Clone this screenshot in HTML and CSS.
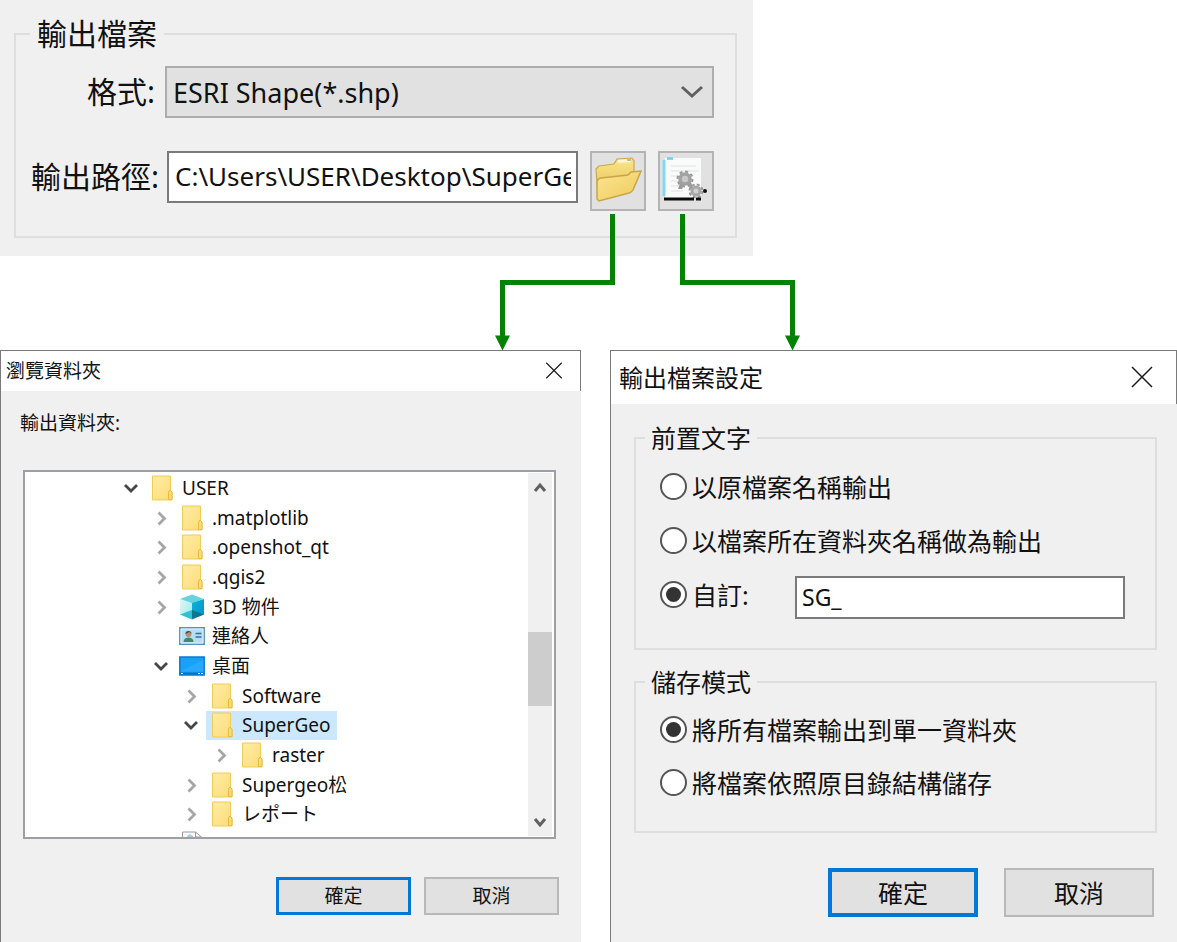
FILE: index.html
```html
<!DOCTYPE html>
<html lang="zh-Hant">
<head>
<meta charset="utf-8">
<meta name="viewport" content="width=device-width, initial-scale=1">
<title>輸出檔案</title>
<link rel="stylesheet" href="styles.css">
</head>
<body>
<svg class="sprites" aria-hidden="true">
  <defs>
    <linearGradient id="folder-fill" x1="0" y1="0" x2="1" y2="1"><stop offset="0" stop-color="#ffeca6"/><stop offset="1" stop-color="#fddc76"/></linearGradient>
    <linearGradient id="open-back" x1="0" y1="0" x2="0" y2="1"><stop offset="0" stop-color="#fbe58d"/><stop offset="1" stop-color="#e2bd49"/></linearGradient>
    <linearGradient id="open-front" x1="0" y1="0" x2="1" y2="1"><stop offset="0" stop-color="#fbe594"/><stop offset="1" stop-color="#efca58"/></linearGradient>
    <linearGradient id="cube-left" x1="0" y1="0" x2="1" y2="1"><stop offset="0" stop-color="#e2f8f8"/><stop offset="1" stop-color="#9fe6ea"/></linearGradient>
    <linearGradient id="cube-right" x1="0" y1="0" x2="1" y2="1"><stop offset="0" stop-color="#10b4d8"/><stop offset="1" stop-color="#0090c8"/></linearGradient>
  </defs>
  <symbol id="i-folder" viewBox="0 0 26 26">
    <path d="M3.500 1h18v15l1.500 2v7h-19.500z" fill="url(#folder-fill)" stroke="#f0cb55"/>
    <path d="M19.500 24.500v-7.500l1.500-2 2 2v7.500z" fill="#fbdc78" stroke="#e6bb3e"/>
  </symbol>
  <symbol id="i-cube" viewBox="0 0 26 26">
    <path d="M1 5l12 3.500v16.500l-12-4.500z" fill="url(#cube-left)"/>
    <path d="M25 5l-12 3.500v16.500l12-4.500z" fill="url(#cube-right)"/>
    <path d="M1 5l12-4.500 12 4.500-12 4z" fill="#62d3df"/>
    <path d="M13 16l12 4.500-12 5z" fill="#12667c" opacity=".75"/>
    <path d="M1 20.500l12-4.500v9.500z" fill="#2cc3d2"/>
  </symbol>
  <symbol id="i-contact" viewBox="0 0 26 26">
    <path d="M.8 4.800h24.400v16.400h-24.400z" fill="#b5def5" stroke="#5b91b5" stroke-width="1.500"/>
    <path d="M2 6h22v14h-22z" fill="none" stroke="#dff2fc"/>
    <path d="M4.500 19c0-3 2-4.500 5-4.500s5 1.500 5 4.500z" fill="#43886a"/>
    <circle cx="9.500" cy="11" r="3" fill="#b58f72"/><path d="M6.500 11c-.5-4 6-4 6-.5l-2-1.500z" fill="#51473c"/>
    <path d="M16.500 10.500h6M16.500 14h6" stroke="#376f98" stroke-width="1.500"/>
  </symbol>
  <symbol id="i-desktop" viewBox="0 0 26 26">
    <path d="M.8 4h24.400v18h-24.400z" fill="#19a1fa" stroke="#087cc9" stroke-width="1.500"/>
    <path d="M1.500 18.500l23-12v12z" fill="#3cb0ff" opacity=".5"/>
    <path d="M1.500 20.500h23" stroke="#0870b8" stroke-width="2"/>
    <path d="M2 20.500h2M19 20.500h2M22 20.500h2" stroke="#d6f0ff"/>
  </symbol>
  <symbol id="i-file" viewBox="0 0 26 26">
    <path d="M3.500 1h13l6 5v19h-19z" fill="#fafafa" stroke="#9b9b9b"/>
    <path d="M16.500 1v5h6" fill="none" stroke="#9b9b9b"/><path d="M8 5l3-2 3 2v4h-6z" fill="#9fd3e8"/>
  </symbol>
  <symbol id="i-down" viewBox="0 0 20 20"><path d="M4 7l6 6 6-6" fill="none" stroke="#464646" stroke-width="2.800"/></symbol>
  <symbol id="i-right" viewBox="0 0 20 20"><path d="M7.500 4.500l6 6-6 6" fill="none" stroke="#a6a6a6" stroke-width="2.800"/></symbol>
  <symbol id="i-close" viewBox="0 0 22 22"><path d="M1 1l20 20M21 1L1 21" fill="none" stroke="#1a1a1a" stroke-width="1.500"/></symbol>
</svg>

<main class="board">
  <section class="export">
    <fieldset class="group group-export">
      <legend>輸出檔案</legend>
      <div class="field">
        <label class="field-label field-label-format" for="format">格式:</label>
        <div class="select-wrap">
          <select id="format" class="select"><option>ESRI Shape(*.shp)</option></select>
          <svg class="select-arrow" viewBox="0 0 24 16" aria-hidden="true"><path d="M2 3l10 9 10-9" fill="none" stroke="#606060" stroke-width="3"/></svg>
        </div>
      </div>
      <div class="field field-path">
        <label class="field-label" for="path">輸出路徑:</label>
        <input id="path" class="text path" type="text" value="C:\Users\USER\Desktop\SuperGeo">
        <button class="tool" type="button" aria-label="瀏覽資料夾">
          <svg class="tool-icon" viewBox="0 0 50 54" aria-hidden="true">
            <path d="M3 15l3-3 15-2 3-5 15-1 2 3v11l2 3-34 24-4-3z" fill="url(#open-back)" stroke="#c9aa50" stroke-width="1.200"/>
            <path d="M25 6l12-1 1 3-13 1z" fill="#fff6cd"/><path d="M34 5h4v2h-4z" fill="#9fc9b0"/>
            <path d="M4 28q0-3 4-4l27-3 3-3 10-1-8 19q-1 2-4 3l-30 8-2-2z" fill="url(#open-front)" stroke="#c8a548" stroke-width="1.500"/>
          </svg>
        </button>
        <button class="tool" type="button" aria-label="輸出檔案設定">
          <svg class="tool-icon" viewBox="0 0 50 54" aria-hidden="true">
            <path d="M4 4h36v38l-4 3h-32z" fill="#f9fafa"/>
            <path d="M3 6v36" stroke="#86d7f5" stroke-width="3"/><path d="M6 4.500h6" stroke="#6dcdf2" stroke-width="2.500"/>
            <path d="M10 12h25M10 17h28M10 22h8M10 27h6M10 32h8M10 37h12" stroke="#e8eaea" stroke-width="1.500"/>
            <circle cx="24" cy="25" r="5" fill="#c8c8c8" stroke="#a2a2a2" stroke-width="3.500"/>
            <circle cx="24" cy="25" r="7.500" fill="none" stroke="#969696" stroke-width="2" stroke-dasharray="3 2.890"/>
            <path d="M19 29l-2 6h4l2-4M27 29l2 6 3-1-2-6" fill="#9b9b9b"/>
            <circle cx="35" cy="37" r="4" fill="#d0d0d0" stroke="#a8a8a8" stroke-width="3"/>
            <circle cx="35" cy="37" r="6.500" fill="none" stroke="#9a9a9a" stroke-width="2" stroke-dasharray="3 2.100"/>
            <circle cx="44" cy="37" r="2" fill="#111"/>
            <path d="M3 45h30M35 45h5" stroke="#0c0c0c" stroke-width="3"/>
          </svg>
        </button>
      </div>
    </fieldset>
  </section>

  <svg class="connectors" viewBox="0 0 1177 137" preserveAspectRatio="none" aria-hidden="true">
    <path d="M612.500 0v68.500H502.500v54M682.500 0v68.500H792.500v54" fill="none" stroke="#048204" stroke-width="5"/>
    <path d="M495 121.500h15l-7.500 15zM785 121.500h15l-7.500 15z" fill="#048204"/>
  </svg>

  <div class="dialogs">
    <section class="dialog">
      <header class="titlebar titlebar-browse">
        <h2 class="title">瀏覽資料夾</h2>
        <button class="close" type="button" aria-label="關閉"><svg class="close-icon-small" aria-hidden="true"><use href="#i-close"/></svg></button>
      </header>
      <div class="body body-browse">
        <p class="prompt">輸出資料夾:</p>
        <div class="tree">
          <ul class="nodes">
            <li class="node level-0"><svg class="twisty"><use href="#i-down"/></svg><a class="item" href="#"><svg class="icon"><use href="#i-folder"/></svg>USER</a></li>
            <li class="node level-1"><svg class="twisty"><use href="#i-right"/></svg><a class="item" href="#"><svg class="icon"><use href="#i-folder"/></svg>.matplotlib</a></li>
            <li class="node level-1"><svg class="twisty"><use href="#i-right"/></svg><a class="item" href="#"><svg class="icon"><use href="#i-folder"/></svg>.openshot_qt</a></li>
            <li class="node level-1"><svg class="twisty"><use href="#i-right"/></svg><a class="item" href="#"><svg class="icon"><use href="#i-folder"/></svg>.qgis2</a></li>
            <li class="node level-1"><svg class="twisty"><use href="#i-right"/></svg><a class="item" href="#"><svg class="icon"><use href="#i-cube"/></svg>3D 物件</a></li>
            <li class="node level-1"><svg class="twisty"></svg><a class="item" href="#"><svg class="icon"><use href="#i-contact"/></svg>連絡人</a></li>
            <li class="node level-1"><svg class="twisty"><use href="#i-down"/></svg><a class="item" href="#"><svg class="icon"><use href="#i-desktop"/></svg>桌面</a></li>
            <li class="node level-2"><svg class="twisty"><use href="#i-right"/></svg><a class="item" href="#"><svg class="icon"><use href="#i-folder"/></svg>Software</a></li>
            <li class="node level-2"><svg class="twisty"><use href="#i-down"/></svg><a class="item selected" href="#"><svg class="icon"><use href="#i-folder"/></svg>SuperGeo</a></li>
            <li class="node level-3"><svg class="twisty"><use href="#i-right"/></svg><a class="item" href="#"><svg class="icon"><use href="#i-folder"/></svg>raster</a></li>
            <li class="node level-2"><svg class="twisty"><use href="#i-right"/></svg><a class="item" href="#"><svg class="icon"><use href="#i-folder"/></svg>Supergeo松</a></li>
            <li class="node level-2"><svg class="twisty"><use href="#i-right"/></svg><a class="item" href="#"><svg class="icon"><use href="#i-folder"/></svg>レポート</a></li>
            <li class="node level-1"><svg class="twisty"></svg><span class="item"><svg class="icon"><use href="#i-file"/></svg></span></li>
          </ul>
          <div class="scrollbar" aria-hidden="true">
            <svg class="scroll-arrow" viewBox="0 0 24 30"><path d="M7 18l5-6 5 6" fill="none" stroke="#606060" stroke-width="3"/></svg>
            <div class="track-above"></div>
            <div class="thumb"></div>
            <div class="track-below"></div>
            <svg class="scroll-arrow" viewBox="0 0 24 30"><path d="M7 13l5 6 5-6" fill="none" stroke="#606060" stroke-width="3"/></svg>
          </div>
        </div>
        <div class="actions actions-browse">
          <button class="button button-small primary" type="button">確定</button>
          <button class="button button-small" type="button">取消</button>
        </div>
      </div>
    </section>

    <section class="dialog">
      <header class="titlebar titlebar-settings">
        <h2 class="title">輸出檔案設定</h2>
        <button class="close" type="button" aria-label="關閉"><svg class="close-icon" aria-hidden="true"><use href="#i-close"/></svg></button>
      </header>
      <form class="body body-settings">
        <fieldset class="group group-prefix">
          <legend>前置文字</legend>
          <label class="choice"><input class="radio" type="radio" name="prefix">以原檔案名稱輸出</label>
          <label class="choice"><input class="radio" type="radio" name="prefix">以檔案所在資料夾名稱做為輸出</label>
          <div class="custom">
            <label class="choice choice-custom"><input class="radio" type="radio" name="prefix" checked>自訂:</label>
            <input class="text custom-text" type="text" value="SG_" aria-label="自訂">
          </div>
        </fieldset>
        <fieldset class="group group-mode">
          <legend>儲存模式</legend>
          <label class="choice"><input class="radio" type="radio" name="mode" checked>將所有檔案輸出到單一資料夾</label>
          <label class="choice"><input class="radio" type="radio" name="mode">將檔案依照原目錄結構儲存</label>
        </fieldset>
        <div class="actions actions-settings">
          <button class="button button-large primary" type="button">確定</button>
          <button class="button button-large" type="button">取消</button>
        </div>
      </form>
    </section>
  </div>
</main>
</body>
</html>
```
FILE: styles.css
```css
* {
  box-sizing: border-box;
}

body {
  margin: 0;
  background: #fff;
  color: #111;
  font-family: "Noto Sans", "Noto Sans CJK TC", sans-serif;
}

button,
input,
select {
  color: inherit;
  font: inherit;
}

.sprites {
  position: absolute;
  width: 0;
  height: 0;
}

.board {
  position: relative;
  display: flex;
  flex-direction: column;
  gap: 94px;
  min-height: 100vh;
}

.connectors {
  position: absolute;
  top: 214px;
  left: 0;
  width: 100%;
  height: 137px;
  pointer-events: none;
}

/* Shared controls */

.group {
  display: flex;
  flex-direction: column;
  min-width: 0;
  margin: 0;
  border: 2px solid #dedede;
}

.group legend {
  padding: 0 6px;
}

.text {
  min-width: 0;
  border: 2px solid #7a7a7a;
  border-radius: 0;
  background: #fff;
  outline: 0;
}

.button {
  padding: 0 0 2px;
  border: 2px solid #b8b8b8;
  background: #e1e1e1;
}

.button.primary {
  border-color: #0078d7;
}

/* Export panel */

.export {
  width: 64%;
  padding: 18px 16px 18px 14px;
  background: #f0f0f0;
  font-size: 26px;
}

.group-export {
  gap: 33px;
  padding: 16px 21px 25px 14px;
}

.group-export legend {
  padding: 0 7px;
  font-size: 30px;
  line-height: 32px;
}

.field {
  display: flex;
  align-items: center;
}

.field-path {
  align-items: flex-start;
  gap: 12px;
}

.field-label {
  flex: none;
  width: 125px;
  font-size: 30px;
  line-height: 52px;
  text-align: right;
  white-space: nowrap;
}

.field-label-format {
  margin-right: 10px;
}

.field-path .field-label {
  width: 129px;
  margin-right: -4px;
}

.select-wrap {
  position: relative;
  flex: 1;
}

.select {
  display: block;
  width: 100%;
  height: 52px;
  padding: 0 48px 0 6px;
  appearance: none;
  border: 2px solid #adadad;
  border-radius: 0;
  background: #e1e1e1;
  font-size: 27px;
}

.select-arrow {
  position: absolute;
  top: 18px;
  right: 10px;
  width: 24px;
  height: 16px;
  pointer-events: none;
}

.path {
  flex: 1;
  height: 52px;
  padding: 0 5px 2px 6px;
}

.tool {
  display: flex;
  flex: none;
  align-items: center;
  justify-content: center;
  width: 56px;
  height: 60px;
  padding: 0;
  border: 2px solid #b4b4b4;
  background: #e1e1e1;
}

.tool-icon {
  width: 50px;
  height: 54px;
}

/* Dialog windows */

.dialogs {
  display: grid;
  flex: 1;
  grid-template-columns: 581fr 567fr;
  gap: 29px;
}

.dialog {
  display: flex;
  flex-direction: column;
  min-width: 0;
  border-top: 1px solid #7a7a7a;
  border-left: 1px solid #7a7a7a;
}

.titlebar {
  display: flex;
  align-items: center;
  justify-content: space-between;
  border-right: 1px solid #7a7a7a;
  background: #fff;
}

.titlebar-browse {
  height: 40px;
  padding: 0 17px 2px 5px;
  font-size: 19px;
}

.titlebar-settings {
  height: 53px;
  padding: 0 22px 2px 8px;
  font-size: 24px;
}

.title {
  margin: 0;
  font-size: inherit;
  font-weight: 400;
}

.close {
  display: flex;
  padding: 0;
  border: 0;
  background: none;
}

.close-icon {
  width: 24px;
  height: 22px;
}

.close-icon-small {
  width: 18px;
  height: 17px;
}

.body {
  flex: 1;
  background: #f0f0f0;
}

.actions {
  display: flex;
  justify-content: flex-end;
}

/* Folder browser */

.body-browse {
  padding: 18px 22px 27px;
  font-size: 19px;
}

.prompt {
  margin: 0 0 33px -3px;
  line-height: 28px;
}

.tree {
  display: flex;
  height: 369px;
  margin-right: 3px;
  padding: 1px 2px 1px 0;
  overflow: hidden;
  border: 2px solid #9ca0a6;
  background: #fff;
}

.nodes {
  display: grid;
  flex: 1;
  grid-auto-rows: 1fr;
  height: 386px;
  margin: 0;
  padding: 0;
  list-style: none;
}

.node {
  display: flex;
  gap: 5px;
  align-items: stretch;
}

.level-0 {
  padding-left: 96px;
}

.level-1 {
  padding-left: 126px;
}

.level-2 {
  padding-left: 156px;
}

.level-3 {
  padding-left: 186px;
}

.twisty {
  align-self: center;
  width: 20px;
  height: 20px;
}

.item {
  display: flex;
  gap: 7px;
  align-items: center;
  padding: 0 7px 0 3px;
  color: inherit;
  line-height: 28px;
  text-decoration: none;
  white-space: nowrap;
}

.item.selected {
  background: #cce8ff;
}

.icon {
  width: 26px;
  height: 26px;
}

.scrollbar {
  display: flex;
  flex: none;
  flex-direction: column;
  width: 24px;
  background: #f0f0f0;
}

.scroll-arrow {
  width: 24px;
  height: 30px;
}

.track-above {
  flex: 129;
}

.track-below {
  flex: 100;
}

.thumb {
  height: 74px;
  background: #cdcdcd;
}

.actions-browse {
  gap: 13px;
  margin-top: 38px;
}

.button-small {
  width: 135px;
  height: 38px;
}

.button-small.primary {
  border-width: 3px;
}

/* Output settings */

.body-settings {
  padding: 18px 20px 25px 23px;
  font-size: 25px;
}

.group-prefix,
.group-mode {
  padding-right: 30px;
  padding-left: 24px;
}

.group-prefix {
  gap: 11px;
  padding-top: 11px;
  padding-bottom: 29px;
}

.group-mode {
  gap: 10px;
  margin-top: 16px;
  padding-top: 10px;
  padding-bottom: 27px;
}

.group-prefix legend,
.group-mode legend {
  margin-left: -15px;
  line-height: 32px;
}

.choice {
  display: flex;
  gap: 5px;
  align-items: center;
  height: 43px;
  line-height: 30px;
  white-space: nowrap;
}

.radio {
  display: grid;
  flex: none;
  place-items: center;
  width: 27px;
  height: 27px;
  margin: 0;
  appearance: none;
  border: 2px solid #555;
  border-radius: 50%;
  background: #fff;
}

.radio:checked::before {
  width: 15px;
  height: 15px;
  border-radius: 50%;
  background: #333;
  content: "";
}

.custom {
  display: flex;
  align-items: flex-end;
  height: 46px;
}

.choice-custom {
  flex: none;
  align-self: flex-start;
  width: 135px;
}

.custom-text {
  flex: 1;
  height: 43px;
  padding: 0 5px 2px;
  font-size: 23px;
}

.actions-settings {
  gap: 26px;
  margin-top: 35px;
  padding-right: 3px;
}

.button-large {
  width: 150px;
  height: 49px;
}

.button-large.primary {
  border-width: 4px;
}
```
